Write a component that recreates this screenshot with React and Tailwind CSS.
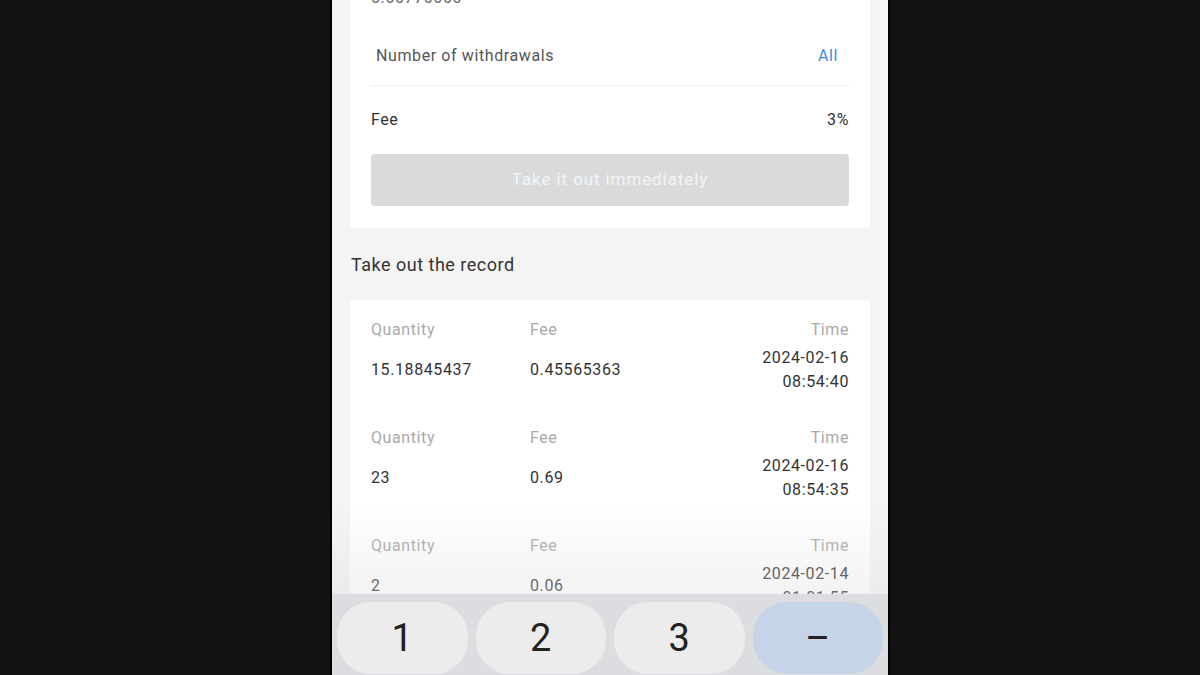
const records = [
  { qty: '15.18845437', fee: '0.45565363', date: '2024-02-16', time: '08:54:40' },
  { qty: '23', fee: '0.69', date: '2024-02-16', time: '08:54:35' },
  { qty: '2', fee: '0.06', date: '2024-02-14', time: '01:01:55' },
]

const keys = ['1', '2', '3', '–']

function RecordRow({ r }) {
  return (
    <div className="pt-[20px] pb-[14px] tracking-[0.6px]">
      <div className="grid grid-cols-[159px_1fr_auto] text-[16px] leading-5 text-[#a9a9a9]">
        <span>Quantity</span>
        <span>Fee</span>
        <span className="text-right">Time</span>
      </div>
      <div className="mt-[6px] grid grid-cols-[159px_1fr_auto] items-center text-[16px] text-[#333]">
        <span>{r.qty}</span>
        <span>{r.fee}</span>
        <div className="text-right leading-6">
          <div>{r.date}</div>
          <div>{r.time}</div>
        </div>
      </div>
    </div>
  )
}

export default function App() {
  return (
    <div className="flex h-[675px] w-full overflow-hidden bg-[#121212] pl-[330px] font-['Roboto',sans-serif]">
      <div className="relative h-[675px] w-[560px] shrink-0 overflow-hidden border-x-2 border-black bg-[#f4f4f4]">
        {/* Withdraw card */}
        <div className="mx-[18px] -mt-[44px] rounded-b bg-white px-[21px] pb-[22px] tracking-[0.6px]">
          <div className="h-[70px] pt-[32px] text-[16px] leading-5 text-[#666]">0.00770000</div>
          <div className="flex h-[60px] items-center justify-between border-b border-[#efefef] pl-[5px] pr-[11px] text-[16px] text-[#555]">
            <span>Number of withdrawals</span>
            <span className="text-[#3a8fd8]">All</span>
          </div>
          <div className="flex h-[68px] items-center justify-between text-[16px] text-[#333]">
            <span>Fee</span>
            <span>3%</span>
          </div>
          <button className="flex h-[52px] w-full items-center justify-center rounded bg-[#d8dadc] text-[17px] tracking-[0.9px] text-[#f3f4f6]">
            Take it out immediately
          </button>
        </div>

        <div className="flex h-[72px] items-center pl-[19px] text-[18px] tracking-[0.5px] text-[#333]">
          Take out the record
        </div>

        {/* Record list */}
        <div className="mx-[18px] rounded bg-white px-[21px]">
          {records.map((r, i) => (
            <RecordRow key={i} r={r} />
          ))}
        </div>

        {/* Keyboard fade */}
        <div className="absolute left-0 right-0 top-[500px] h-[94px] bg-gradient-to-b from-transparent to-[#dcdde0]/35" />

        {/* Number keyboard */}
        <div className="absolute bottom-0 left-0 right-0 top-[594px] bg-[#dcdde0] px-[5px] pt-[8px]">
          <div className="grid grid-cols-4 gap-2">
            {keys.map((k, i) => (
              <div
                key={k}
                className={`flex h-[72px] items-center justify-center rounded-[34px] text-[38px] text-[#222] ${
                  i === 3 ? 'bg-[#c6d4e7]' : 'bg-[#ececec]'
                }`}
              >
                {k}
              </div>
            ))}
          </div>
        </div>
      </div>
    </div>
  )
}
